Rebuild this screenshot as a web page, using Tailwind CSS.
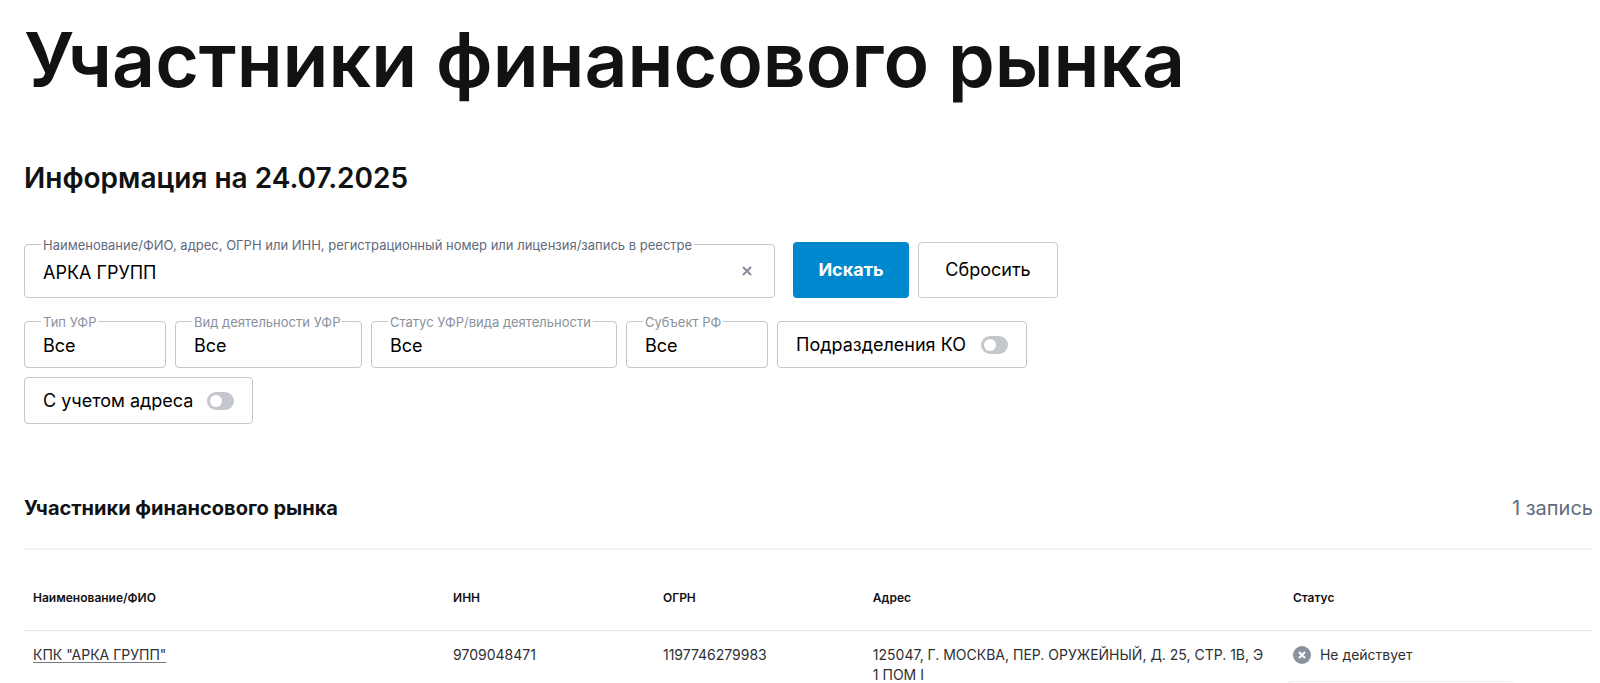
<!DOCTYPE html>
<html lang="ru">
<head>
    <meta charset="UTF-8">
    <title>Участники финансового рынка</title>
    <script src="https://cdn.jsdelivr.net/npm/@tailwindcss/browser@4"></script>
</head>
<body class="bg-white text-[#111213] font-['Inter','Liberation_Sans',sans-serif]">
    <main class="pl-6 pr-[7px] pt-4">
        <h1 class="text-[75px] leading-[88px] font-semibold whitespace-nowrap">Участники финансового рынка</h1>
        <h2 class="mt-14 text-[28px] leading-9 font-semibold">Информация на 24.07.2025</h2>

        <form class="mt-[46px] text-lg text-black" onsubmit="return false">
            <div class="flex items-end">
                <div class="relative flex w-[751px] h-[54px] border border-[#c4c7cc] rounded">
                    <label for="query" class="absolute left-4 -top-2 px-0.5 bg-white text-[13px] leading-4 text-[#5f6b7c] whitespace-nowrap">Наименование/ФИО, адрес, ОГРН или ИНН, регистрационный номер или лицензия/запись в реестре</label>
                    <input id="query" type="text" value="АРКА ГРУПП" class="flex-1 pl-[18px] pt-1 outline-none">
                    <button type="button" aria-label="Очистить" onclick="clearQuery()" class="w-[54px] flex items-center justify-center">
                        <svg width="10" height="10" viewBox="0 0 10 10" stroke="#858d9a" stroke-width="2"><path d="M1 1l8 8M9 1l-8 8"/></svg>
                    </button>
                </div>
                <button type="submit" class="ml-[18px] w-[116px] h-14 rounded bg-[#0088cf] text-white font-bold">Искать</button>
                <button type="reset" class="ml-[9px] w-[140px] h-14 rounded border border-[#c9cbd0]">Сбросить</button>
            </div>

            <div class="mt-[23px] max-w-[1040px] flex flex-wrap gap-[9px]">
                <div class="relative w-[142px] h-[47px] border border-[#c4c7cc] rounded">
                    <label for="type" class="absolute left-4 -top-2 px-0.5 bg-white text-[13px] leading-4 text-[#8a919d] whitespace-nowrap">Тип УФР</label>
                    <select id="type" class="w-full h-full pl-[18px] pt-0.5 appearance-none outline-none"><option>Все</option></select>
                </div>
                <div class="relative w-[187px] h-[47px] border border-[#c4c7cc] rounded">
                    <label for="activity" class="absolute left-4 -top-2 px-0.5 bg-white text-[13px] leading-4 text-[#8a919d] whitespace-nowrap">Вид деятельности УФР</label>
                    <select id="activity" class="w-full h-full pl-[18px] pt-0.5 appearance-none outline-none"><option>Все</option></select>
                </div>
                <div class="relative w-[246px] h-[47px] border border-[#c4c7cc] rounded">
                    <label for="status" class="absolute left-4 -top-2 px-0.5 bg-white text-[13px] leading-4 text-[#8a919d] whitespace-nowrap">Статус УФР/вида деятельности</label>
                    <select id="status" class="w-full h-full pl-[18px] pt-0.5 appearance-none outline-none"><option>Все</option></select>
                </div>
                <div class="relative w-[142px] h-[47px] border border-[#c4c7cc] rounded">
                    <label for="region" class="absolute left-4 -top-2 px-0.5 bg-white text-[13px] leading-4 text-[#8a919d] whitespace-nowrap">Субъект РФ</label>
                    <select id="region" class="w-full h-full pl-[18px] pt-0.5 appearance-none outline-none"><option>Все</option></select>
                </div>
                <label class="w-[250px] h-[47px] px-[18px] flex items-center justify-between border border-[#c4c7cc] rounded whitespace-nowrap">
                    Подразделения КО
                    <input type="checkbox" class="appearance-none w-[27px] h-[18px] rounded-full bg-[#c4c7cc] checked:bg-[#0088cf] before:block before:size-3 before:m-[3px] before:rounded-full before:bg-white checked:before:ml-3">
                </label>
                <label class="w-[229px] h-[47px] px-[18px] flex items-center justify-between border border-[#c4c7cc] rounded whitespace-nowrap">
                    С учетом адреса
                    <input type="checkbox" class="appearance-none w-[27px] h-[18px] rounded-full bg-[#c4c7cc] checked:bg-[#0088cf] before:block before:size-3 before:m-[3px] before:rounded-full before:bg-white checked:before:ml-3">
                </label>
            </div>
        </form>

        <div class="mt-[70px] pb-[26px] flex items-center justify-between border-b-2 border-[#f4f4f5]">
            <h3 class="text-xl font-bold">Участники финансового рынка</h3>
            <span class="text-xl text-[#5f6b7c]">1 запись</span>
        </div>

        <table class="w-full table-fixed text-left text-sm leading-5">
            <thead>
                <tr class="h-20 border-b border-[#e4e5e7] text-xs">
                    <th class="w-[26.77%] px-[9px] pt-4 font-semibold">Наименование/ФИО</th>
                    <th class="w-[13.38%] px-[9px] pt-4 font-semibold">ИНН</th>
                    <th class="w-[13.38%] px-[9px] pt-4 font-semibold">ОГРН</th>
                    <th class="w-[26.77%] px-[9px] pt-4 font-semibold">Адрес</th>
                    <th class="px-[9px] pt-4 font-semibold">Статус</th>
                </tr>
            </thead>
            <tbody class="align-top text-[#2e3034]">
                <tr>
                    <td class="px-[9px] py-3.5"><a href="#" class="underline decoration-[#77797c] underline-offset-2">КПК "АРКА ГРУПП"</a></td>
                    <td class="px-[9px] py-3.5">9709048471</td>
                    <td class="px-[9px] py-3.5">1197746279983</td>
                    <td class="px-[9px] py-3.5">125047, Г. МОСКВА, ПЕР. ОРУЖЕЙНЫЙ, Д. 25, СТР. 1В, Э 1&nbsp;ПОМ I</td>
                    <td class="px-[9px] py-3.5">
                        <div class="flex items-center gap-[9px]">
                            <svg width="18" height="18" viewBox="0 0 18 18"><circle cx="9" cy="9" r="9" fill="#8a919f"/><path d="M6 6l6 6M12 6l-6 6" stroke="#fff" stroke-width="2"/></svg>
                            Не действует
                        </div>
                        <div class="mt-4 -ml-1.5 w-[228px] h-10 rounded border border-[#eeeff0]"></div>
                    </td>
                </tr>
            </tbody>
        </table>
    </main>

    <script>
        function clearQuery() {
            document.getElementById('query').value = '';
        }
    </script>
</body>
</html>
